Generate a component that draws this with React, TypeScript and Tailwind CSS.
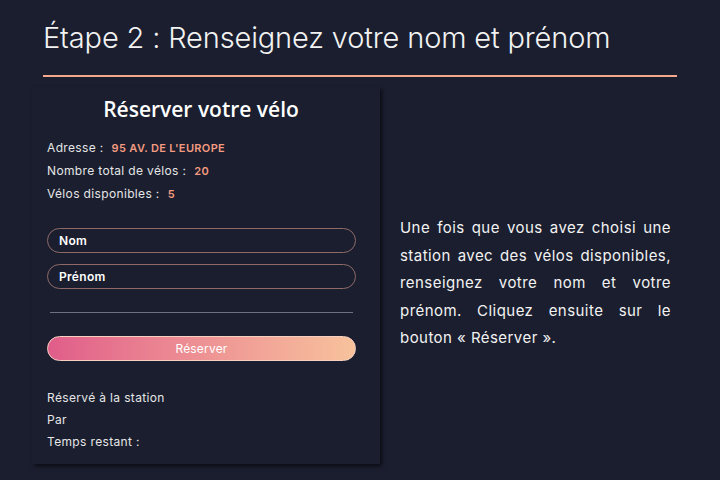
import React from "react";

export default function App() {
  const font = { fontFamily: "Inter, 'Noto Sans', sans-serif" };
  return (
    <div className="w-[720px] h-[480px] bg-[#1a1e2e] text-white overflow-hidden" style={font}>
      <div className="px-[43px] pt-[18px]">
        <h1 className="text-[29px] font-light leading-[40px] tracking-[-0.15px] text-[#f2f2f2]">
          Étape 2 : Renseignez votre nom et prénom
        </h1>
        <div className="mt-[17px] h-[2px] bg-[#f2a88a]" />
      </div>
      <div className="flex pl-[32px] mt-[10px]">
        <div className="w-[348px] h-[377px] bg-[#1a1e2e] shadow-[2px_2px_4px_rgba(0,0,0,0.6)] px-[15px] pt-[8px]">
          <h2 className="text-center text-[21px] font-semibold leading-[28px] pr-[10px]" style={{ fontFamily: "'Open Sans', sans-serif" }}>
            Réserver votre vélo
          </h2>
          <div className="mt-[17px] flex flex-col gap-[7px] text-[12px] leading-[15px] tracking-[0.35px] text-[#e6e6e6]">
            <div>Adresse :<span className="ml-[8px] text-[11px] font-semibold text-[#f39a80]">95 AV. DE L'EUROPE</span></div>
            <div>Nombre total de vélos :<span className="ml-[8px] text-[11px] font-semibold text-[#f39a80]">20</span></div>
            <div>Vélos disponibles :<span className="ml-[8px] text-[11px] font-semibold text-[#f39a80]">5</span></div>
          </div>
          <div className="mt-[26px] flex flex-col gap-[11px] w-[309px]">
            <div className="h-[25px] rounded-full border border-[#8f6a68] flex items-center px-[11px] text-[12px] font-semibold tracking-[0.3px]">Nom</div>
            <div className="h-[25px] rounded-full border border-[#8f6a68] flex items-center px-[11px] text-[12px] font-semibold tracking-[0.3px]">Prénom</div>
          </div>
          <div className="mt-[23px] ml-[3px] w-[303px] h-px bg-[#6b7280]" />
          <div className="mt-[23px] w-[309px] h-[25px] rounded-full border border-[#f5d0c0] bg-gradient-to-r from-[#e05d8a] to-[#f7c29c] flex items-center justify-center text-[12px] tracking-[0.2px] text-white">
            Réserver
          </div>
          <div className="mt-[29px] flex flex-col gap-[7px] text-[12px] leading-[15px] tracking-[0.35px] text-[#e6e6e6]">
            <div>Réservé à la station</div>
            <div>Par</div>
            <div>Temps restant :</div>
          </div>
        </div>
        <div className="ml-[20px] w-[271px] mt-[127px] text-[15px] leading-[27.5px] tracking-[0.45px] text-justify text-[#f2f2f2]">
          Une fois que vous avez choisi une station avec des vélos disponibles, renseignez votre nom et votre prénom. Cliquez ensuite sur le <span className="whitespace-nowrap">bouton « Réserver ».</span>
        </div>
      </div>
    </div>
  );
}
